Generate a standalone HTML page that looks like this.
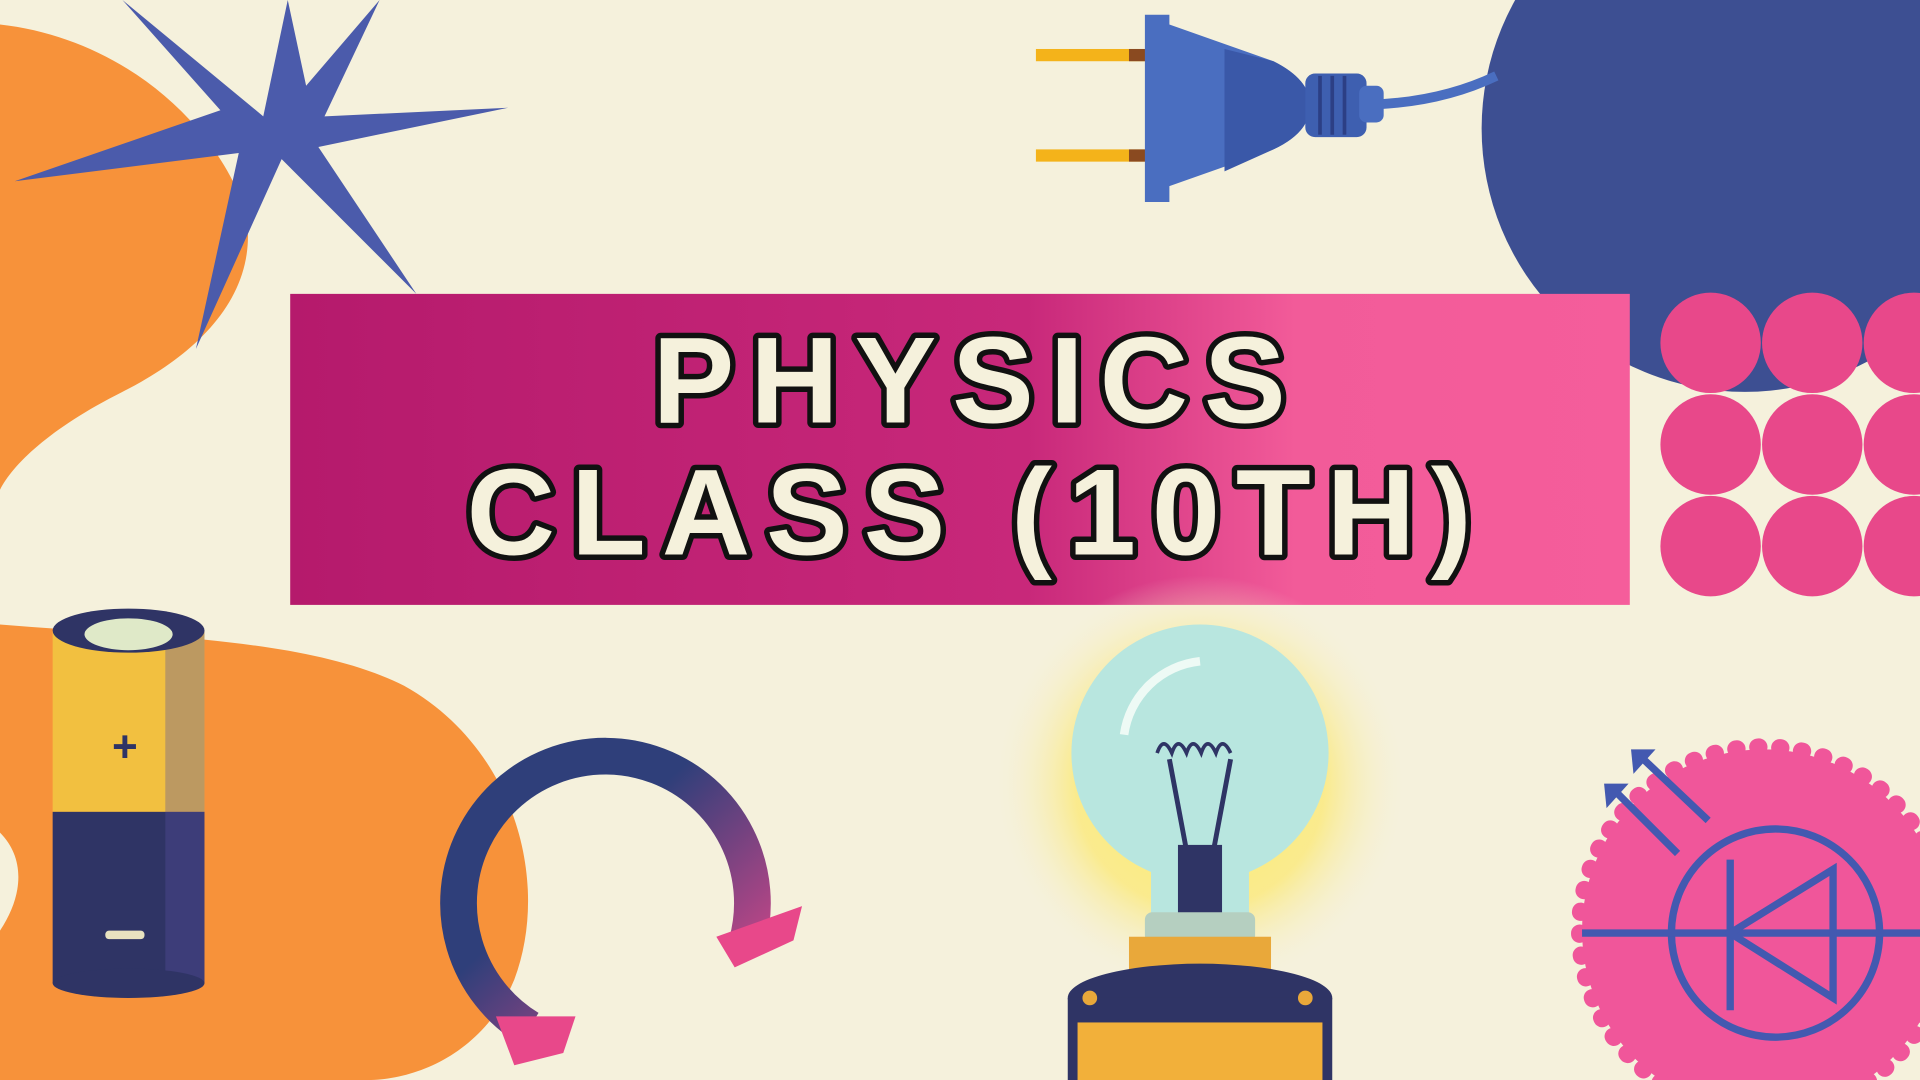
<!DOCTYPE html>
<html><head><meta charset="utf-8"><style>
html,body{margin:0;padding:0;background:#f5f1dc;overflow:hidden}
svg{display:block}
</style></head><body>
<svg width="1920" height="1080" viewBox="0 0 1568 882" xmlns="http://www.w3.org/2000/svg">
<defs>
<linearGradient id="ban" x1="0" x2="1" y1="0" y2="0">
<stop offset="0" stop-color="#b51a6c"/><stop offset="0.55" stop-color="#c8287a"/><stop offset="0.75" stop-color="#f25b99"/><stop offset="1" stop-color="#f55d9b"/></linearGradient>
<radialGradient id="glow" cx="0.5" cy="0.5" r="0.5"><stop offset="0" stop-color="#fff06a"/><stop offset="0.6" stop-color="#fbe97a" stop-opacity="0.8"/><stop offset="1" stop-color="#f5f1dc" stop-opacity="0"/></radialGradient>
<linearGradient id="arc" x1="0" x2="1" y1="0" y2="1"><stop offset="0.4" stop-color="#2f3f7a"/><stop offset="1" stop-color="#e8488a"/></linearGradient>
</defs>
<rect width="1568" height="882" fill="#f5f1dc"/>
<path d="M0 20 C90 30 170 90 200 170 C215 240 160 290 100 320 C40 350 10 380 0 400 Z" fill="#f7923a"/>
<path d="M0 510 C120 520 250 520 330 560 C420 610 450 720 420 800 C395 860 340 882 300 882 L0 882 L0 760 C20 730 20 700 0 680 Z" fill="#f7923a"/>
<polygon points="215,95 235,0 250,70 310,0 265,95 415,88 260,120 340,240 230,130 160,285 195,125 12,148 180,90 100,0" fill="#4b5bab"/>
<circle cx="1425" cy="105" r="215" fill="#3d4f92"/>
<g fill="#e8488a">
<circle cx="1397" cy="280" r="41"/><circle cx="1480" cy="280" r="41"/><circle cx="1563" cy="280" r="41"/>
<circle cx="1397" cy="363" r="41"/><circle cx="1480" cy="363" r="41"/><circle cx="1563" cy="363" r="41"/>
<circle cx="1397" cy="446" r="41"/><circle cx="1480" cy="446" r="41"/><circle cx="1563" cy="446" r="41"/>
</g>
<rect x="846" y="40" width="90" height="10" fill="#f4b31a"/>
<rect x="846" y="122" width="90" height="10" fill="#f4b31a"/>
<rect x="922" y="40" width="14" height="10" fill="#8a4a20"/><rect x="922" y="122" width="14" height="10" fill="#8a4a20"/>
<path d="M935 12 L955 12 L955 20 L1040 50 Q1070 65 1070 86 Q1070 108 1040 122 L955 152 L955 165 L935 165 Z" fill="#4a6ec0"/>
<path d="M1000 40 L1040 50 Q1070 65 1070 86 Q1070 108 1040 122 L1000 140 Z" fill="#3a58a8"/>
<rect x="1066" y="60" width="50" height="52" rx="8" fill="#3e5fb0"/>
<g stroke="#2c3f85" stroke-width="3"><line x1="1078" y1="62" x2="1078" y2="110"/><line x1="1088" y1="62" x2="1088" y2="110"/><line x1="1098" y1="62" x2="1098" y2="110"/></g>
<rect x="1110" y="70" width="20" height="30" rx="6" fill="#4a6ec0"/>
<path d="M1128 85 Q1180 82 1222 62" stroke="#4a6ec0" stroke-width="8" fill="none"/>
<rect x="237" y="240" width="1094" height="254" fill="url(#ban)"/>
<g font-family="Liberation Sans, sans-serif" font-weight="700" font-size="100" text-anchor="middle" fill="#f5f1dc" stroke="#111" stroke-width="9" stroke-linejoin="round" paint-order="stroke" letter-spacing="13">
<text x="798" y="345">PHYSICS</text>
<text x="798" y="453">CLASS (10TH)</text>
</g>
<rect x="43" y="515" width="124" height="148" fill="#f2c040"/>
<rect x="43" y="663" width="124" height="140" fill="#2f3465"/>
<rect x="135" y="515" width="32" height="288" fill="#5a4fa0" opacity="0.35"/>
<ellipse cx="105" cy="803" rx="62" ry="12" fill="#2f3465"/>
<ellipse cx="105" cy="515" rx="62" ry="18" fill="#2f3465"/>
<ellipse cx="105" cy="518" rx="36" ry="13" fill="#dfe9c8"/>
<text x="102" y="622" font-family="Liberation Sans,sans-serif" font-size="36" font-weight="700" fill="#2f3465" text-anchor="middle">+</text>
<rect x="86" y="760" width="32" height="7" rx="3" fill="#e8e2c0"/>
<path d="M432 840 A120 120 0 1 1 610 770" stroke="url(#arc)" stroke-width="30" fill="none"/>
<polygon points="585,765 655,740 648,768 600,790" fill="#e8488a"/>
<polygon points="405,830 470,830 460,860 420,870" fill="#e8488a"/>
<circle cx="980" cy="640" r="170" fill="url(#glow)"/>
<circle cx="980" cy="615" r="105" fill="#b8e6df"/>
<path d="M940 700 L1020 700 L1020 750 L940 750 Z" fill="#b8e6df"/>
<path d="M918 600 A70 70 0 0 1 980 540" stroke="#eefaf5" stroke-width="7" fill="none"/>
<path d="M955 620 L970 700 L990 700 L1005 620" stroke="#2f3465" stroke-width="4" fill="none"/>
<path d="M945 615 q5 -15 12 0 q5 -15 12 0 q5 -15 12 0 q5 -15 12 0 q5 -15 12 0" stroke="#2f3465" stroke-width="3" fill="none"/>
<rect x="962" y="690" width="36" height="60" fill="#2f3465"/>
<rect x="935" y="745" width="90" height="25" rx="6" fill="#b5cfc0"/>
<rect x="922" y="765" width="116" height="30" fill="#e9a83a"/>
<ellipse cx="980" cy="815" rx="108" ry="28" fill="#2f3465"/>
<rect x="872" y="815" width="216" height="67" fill="#2f3465"/>
<rect x="880" y="835" width="200" height="47" fill="#f2b03a"/>
<circle cx="890" cy="815" r="6" fill="#e9a83a"/><circle cx="1066" cy="815" r="6" fill="#e9a83a"/>
<circle cx="1440" cy="760" r="148" fill="#f0569a"/>
<circle cx="1440" cy="760" r="150" fill="none" stroke="#f0569a" stroke-width="14" stroke-dasharray="1 17" stroke-linecap="round"/>
<g stroke="#4359b0" stroke-width="6" fill="none">
<circle cx="1450" cy="762" r="85"/>
<line x1="1292" y1="762" x2="1568" y2="762"/>
<line x1="1413" y1="702" x2="1413" y2="825"/>
<polygon points="1413,762 1497,710 1497,815"/>
<line x1="1318" y1="645" x2="1370" y2="697"/>
<line x1="1340" y1="618" x2="1395" y2="670"/>
</g>
<polygon points="1310,640 1330,640 1312,660" fill="#4359b0"/>
<polygon points="1332,612 1352,612 1334,632" fill="#4359b0"/>
</svg>
</body></html>
